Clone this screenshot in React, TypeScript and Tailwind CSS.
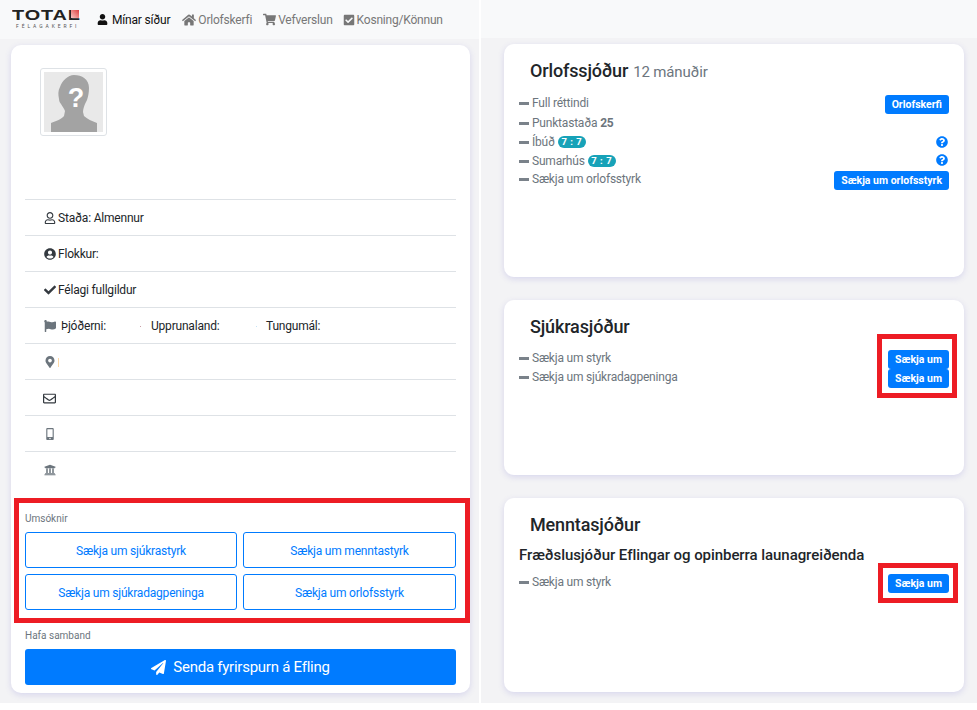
import { FaUser, FaRegUser, FaUserCircle, FaCheck, FaFlag, FaMapMarkerAlt, FaRegEnvelope, FaMobileAlt, FaUniversity, FaHome, FaShoppingCart, FaCheckSquare, FaPaperPlane, FaQuestionCircle } from "react-icons/fa";

function Logo() {
  return (
    <div className="flex w-[67px] flex-col">
      <div className="relative h-[11px] w-[67px]">
        <span className="block origin-left scale-x-[1.42] text-[14px] leading-[11px] font-bold tracking-[0.6px] text-[#222] font-['Liberation_Sans',sans-serif]">TOTAL</span>
        <span className="absolute top-0 right-0 h-[8px] w-[8px] bg-gradient-to-tr from-[#f5c4c4] to-[#d9363e]" />
      </div>
      <span className="mt-[2px] ml-[4px] text-[5px] leading-[6px] tracking-[2.9px] text-[#555]">FÉLAGAKERFI</span>
    </div>
  );
}

function Avatar() {
  return (
    <div className="h-[68px] w-[67px] rounded-[3px] border border-[#dee2e6] bg-white p-[3px]">
      <svg viewBox="0 0 59 60" className="block h-[60px] w-[59px]">
        <rect width="59" height="60" fill="#e9e9e9" />
        <path d="M30 3c8 0 15 4 15 13 0 5-1 9-2 12l-2 4c-1 3-2 5-2 8l1 4c3 3 8 5 13 7v9H7v-9c5-2 11-4 13-7l1-5c-1-3-3-5-4-7-1-1-2-3-2-5-1-5-1-8 1-12 2-6 8-12 14-12z" fill="#a3a3a3" />
        <text x="32" y="35" textAnchor="middle" fontSize="27" fontWeight="700" fill="#fff" fontFamily="Liberation Sans">?</text>
      </svg>
    </div>
  );
}

function InfoRow({ icon, children }: { icon: React.ReactNode; children?: React.ReactNode }) {
  return (
    <div className="flex h-9 items-center border-t border-[#dee2e6] pl-4 pt-px text-[12px] tracking-[-0.2px] text-[#212529]">
      <span className="flex w-[17px] shrink-0 justify-center text-[#343a40]">{icon}</span>
      {children}
    </div>
  );
}

function FundRow({ label, badge, className, children }: { label: React.ReactNode; badge?: string; className: string; children?: React.ReactNode }) {
  return (
    <div className={`flex items-start justify-between ${className}`}>
      <div className="flex h-[18px] items-center text-[12px] tracking-[-0.2px] text-[#6c757d]">
        <span className="mr-[3px] h-[3px] w-[10px] bg-[#7a828a]" />
        <span>{label}</span>
        {badge && <span className="ml-[3px] h-[12px] w-[28px] rounded-full bg-[#17a2b8] text-center text-[9.5px] leading-[12px] font-bold tracking-[0.5px] text-white">{badge}</span>}
      </div>
      {children}
    </div>
  );
}

function SmallButton({ children }: { children: React.ReactNode }) {
  return <button className="mt-px h-[19px] rounded-[3px] bg-[#007bff] px-[7px] text-[10.5px] leading-[19px] font-bold text-white">{children}</button>;
}

function FundCard({ title, note, className, children }: { title: string; note?: string; className: string; children: React.ReactNode }) {
  return (
    <section className={`rounded-[10px] bg-white px-[15px] shadow-[0_2px_6px_rgba(90,85,200,0.18)] ${className}`}>
      <h2 className="pl-[11px] pt-[15px] text-[18px] leading-[24px] font-medium tracking-[-0.15px] text-[#212529]">
        {title}
        {note && <span className="ml-[5px] text-[15px] font-normal text-[#6c757d]">{note}</span>}
      </h2>
      {children}
    </section>
  );
}

const navItems = [
  { icon: <FaHome className="text-[14px]" />, label: "Orlofskerfi", cls: "ml-[12px]" },
  { icon: <FaShoppingCart className="text-[13px]" />, label: "Vefverslun", cls: "ml-[11px]" },
  { icon: <FaCheckSquare className="text-[12px]" />, label: "Kosning/Könnun", cls: "ml-[10px]" },
];

const applications = ["Sækja um sjúkrastyrk", "Sækja um menntastyrk", "Sækja um sjúkradagpeninga", "Sækja um orlofsstyrk"];

export default function App() {
  return (
    <div className="flex h-[710px] w-[977px] bg-white font-['Roboto',sans-serif]">
      {/* Left column */}
      <div className="flex h-[703px] w-[479px] flex-col bg-[#f3f3f5]">
        <nav className="flex h-[39px] items-center bg-[#f8f9fa] pl-3 whitespace-nowrap">
          <Logo />
          <div className="ml-[18px] flex items-center gap-[4px] text-[12px] tracking-[-0.2px] text-[#111]">
            <FaUser className="text-[11px]" />
            Mínar síður
          </div>
          {navItems.map((item) => (
            <div key={item.label} className={`flex items-center gap-[2px] text-[12px] tracking-[-0.2px] text-[#777] ${item.cls}`}>
              {item.icon}
              {item.label}
            </div>
          ))}
        </nav>
        <main className="mt-[6px] ml-[11px] mr-[9px] flex h-[648px] flex-col rounded-[10px] bg-white px-[14px] shadow-[0_2px_6px_rgba(90,85,200,0.18)]">
          <div className="ml-[15px] mt-[23px] h-[131px]">
            <Avatar />
          </div>
          <InfoRow icon={<FaRegUser className="text-[12px]" />}>Staða: Almennur</InfoRow>
          <InfoRow icon={<FaUserCircle className="text-[12px]" />}>Flokkur:</InfoRow>
          <InfoRow icon={<FaCheck className="text-[12px]" />}>Félagi fullgildur</InfoRow>
          <InfoRow icon={<FaFlag className="text-[12px] text-[#6c757d]" />}>
            <span className="ml-[3px] w-[79px]">Þjóðerni:</span>
            <span className="mr-[10px] h-px w-px bg-[#c9a0a8]" />
            <span className="w-[105px]">Upprunaland:</span>
            <span className="mr-[9px] h-px w-px bg-[#c5e4f7]" />
            <span>Tungumál:</span>
          </InfoRow>
          <InfoRow icon={<FaMapMarkerAlt className="text-[12px] text-[#6c757d]" />}>
            <span className="h-[9px] w-px bg-[#fdd9a8]" />
          </InfoRow>
          <InfoRow icon={<FaRegEnvelope className="text-[13px]" />} />
          <InfoRow icon={<FaMobileAlt className="text-[12px] text-[#6c757d]" />} />
          <InfoRow icon={<FaUniversity className="text-[12px] text-[#6c757d]" />} />

          {/* Marked applications box */}
          <div className="-ml-[11px] -mr-[14px] mt-[11px] border-[5px] border-[#ed1c24] pl-[6px] pr-[9px]">
            <p className="mt-[8px] text-[10px] leading-[16px] text-[#6c757d]">Umsóknir</p>
            <div className="mt-[5px] mb-[8px] grid grid-cols-[212px_213px] gap-[6px]">
              {applications.map((label) => (
                <button key={label} className="h-9 rounded-[3px] border border-[#007bff] pt-px text-[12px] tracking-[-0.2px] text-[#007bff]">
                  {label}
                </button>
              ))}
            </div>
          </div>
          <p className="mt-[5px] text-[10px] leading-[16px] text-[#6c757d]">Hafa samband</p>
          <button className="mt-[5px] flex h-9 items-center justify-center gap-[7px] rounded-[3px] bg-[#007bff] text-[15px] tracking-[-0.25px] text-white">
            <FaPaperPlane className="text-[15px]" />
            Senda fyrirspurn á Efling
          </button>
        </main>
      </div>

      {/* Right column */}
      <div className="ml-[2px] flex h-[703px] flex-1 flex-col bg-[#f3f3f5]">
        <div className="h-[38px] bg-[#f8f9fa]" />
        <div className="flex flex-col gap-[23px] pl-[23px] pr-[13px] pt-[6px]">
          <FundCard title="Orlofssjóður" note="12 mánuðir" className="h-[233px]">
            <div className="mt-[10px] flex flex-col">
              <FundRow className="h-[20px]" label="Full réttindi"><SmallButton>Orlofskerfi</SmallButton></FundRow>
              <FundRow className="h-[19px]" label={<>Punktastaða <b>25</b></>} />
              <FundRow className="h-[19px]" label="Íbúð" badge="7 : 7"><FaQuestionCircle className="mt-[3px] mr-px text-[12px] text-[#007bff]" /></FundRow>
              <FundRow className="h-[18px]" label="Sumarhús" badge="7 : 7"><FaQuestionCircle className="mt-[2px] mr-px text-[12px] text-[#007bff]" /></FundRow>
              <FundRow className="h-[20px]" label="Sækja um orlofsstyrk"><SmallButton>Sækja um orlofsstyrk</SmallButton></FundRow>
            </div>
          </FundCard>

          <FundCard title="Sjúkrasjóður" className="h-[175px]">
            <div className="relative mt-[10px] flex flex-col">
              <FundRow className="h-[19px]" label="Sækja um styrk"><SmallButton>Sækja um</SmallButton></FundRow>
              <FundRow className="h-[19px]" label="Sækja um sjúkradagpeninga"><SmallButton>Sækja um</SmallButton></FundRow>
              <div className="absolute -top-[15px] -right-[8px] h-[64px] w-[80px] border-[5px] border-[#ed1c24]" />
            </div>
          </FundCard>

          <FundCard title="Menntasjóður" className="h-[194px]">
            <h3 className="mt-[8px] text-[15px] leading-[20px] font-medium tracking-[-0.06px] text-[#212529]">Fræðslusjóður Eflingar og opinberra launagreiðenda</h3>
            <div className="relative mt-[8px]">
              <FundRow className="h-[20px]" label="Sækja um styrk"><SmallButton>Sækja um</SmallButton></FundRow>
              <div className="absolute -top-[10px] -right-[9px] h-[40px] w-[80px] border-[5px] border-[#ed1c24]" />
            </div>
          </FundCard>
        </div>
      </div>
    </div>
  );
}
